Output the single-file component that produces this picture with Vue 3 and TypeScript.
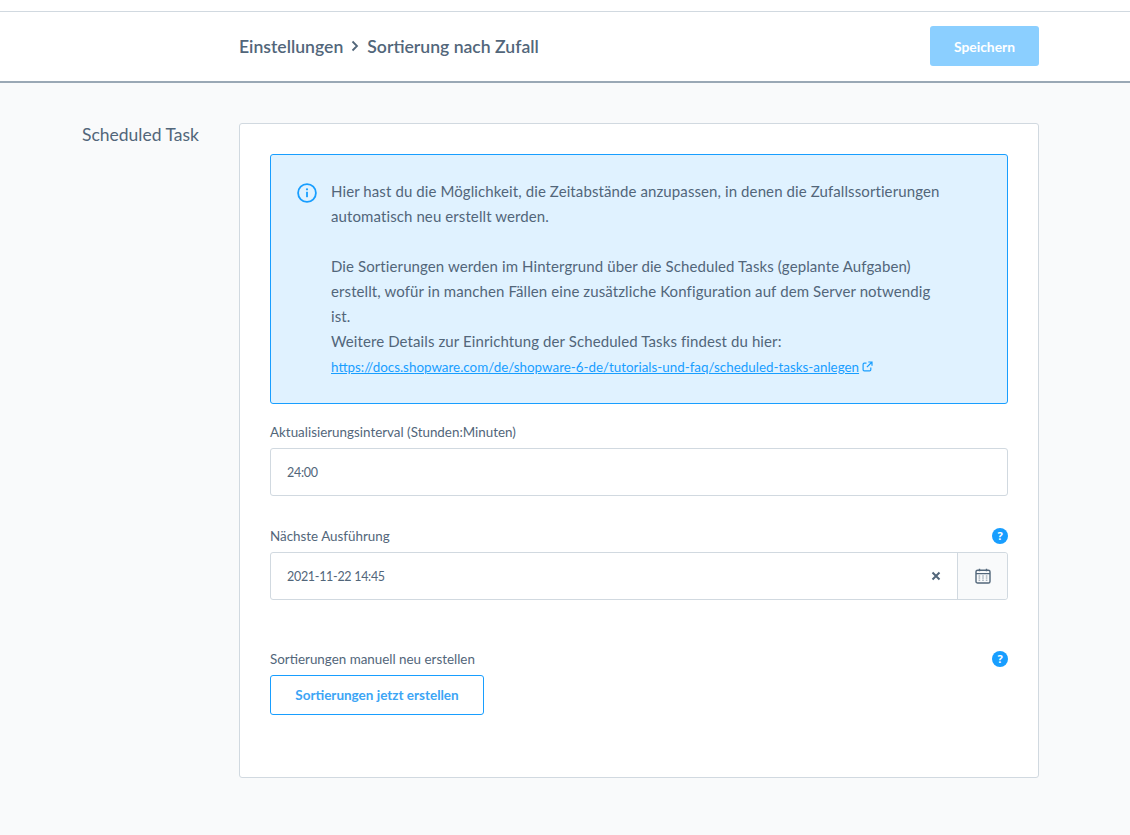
<script setup lang="ts">
const nextRun = "2021-11-22 14:45";
</script>

<template>
  <div class="page">
    <div class="topline"></div>
    <header class="bar">
      <div class="crumbs">
        <span>Einstellungen</span>
        <svg class="chev" width="10" height="12" viewBox="0 0 10 12"><path d="M2.5 1.5 7 6l-4.5 4.5" fill="none" stroke="#52667a" stroke-width="1.8" /></svg>
        <span>Sortierung nach Zufall</span>
      </div>
      <button class="save">Speichern</button>
    </header>
    <main class="content">
      <div class="side">Scheduled Task</div>
      <section class="card">
        <div class="alert">
          <svg class="info" width="20" height="20" viewBox="0 0 20 20">
            <circle cx="10" cy="10" r="8.9" fill="none" stroke="#189eff" stroke-width="1.8" />
            <rect x="9.1" y="8.8" width="1.8" height="5.4" fill="#189eff" />
            <circle cx="10" cy="6.3" r="1.1" fill="#189eff" />
          </svg>
          <div class="alert-text">
            Hier hast du die Möglichkeit, die Zeitabstände anzupassen, in denen die Zufallssortierungen<br />
            automatisch neu erstellt werden.<br /><br />
            Die Sortierungen werden im Hintergrund über die Scheduled Tasks (geplante Aufgaben)<br />
            erstellt, wofür in manchen Fällen eine zusätzliche Konfiguration auf dem Server notwendig<br />
            ist.<br />
            Weitere Details zur Einrichtung der Scheduled Tasks findest du hier:<br />
            <a class="link">https://docs.shopware.com/de/shopware-6-de/tutorials-und-faq/scheduled-tasks-anlegen</a>
            <svg class="ext" width="11" height="11" viewBox="0 0 11 11" fill="none" stroke="#189eff" stroke-width="1.2">
              <path d="M8.8 6.5v2.2a1.2 1.2 0 0 1-1.2 1.2H2.3a1.2 1.2 0 0 1-1.2-1.2V3.4a1.2 1.2 0 0 1 1.2-1.2h2.2" />
              <path d="M6.3 1h3.7v3.7M10 1 4.9 6.1" />
            </svg>
          </div>
        </div>

        <label class="lbl first">Aktualisierungsinterval (Stunden:Minuten)</label>
        <div class="field">24:00</div>

        <div class="lbl-row second">
          <label class="lbl">Nächste Ausführung</label>
          <span class="help">?</span>
        </div>
        <div class="field date">
          <span class="date-val">{{ nextRun }}</span>
          <svg class="clear" width="10" height="10" viewBox="0 0 10 10"><path d="M1.5 1.5l7 7M8.5 1.5l-7 7" stroke="#52667a" stroke-width="2" /></svg>
          <span class="cal">
            <svg width="16" height="16" viewBox="0 0 16 16" fill="none" stroke="#52667a" stroke-width="1.4">
              <rect x="1" y="2.2" width="14" height="12.8" rx="1.6" />
              <path d="M1 5.6h14M4.5 .8v2.4M11.5 .8v2.4" />
              <path d="M3.6 8h1.6M7.2 8h1.6M10.8 8h1.6M3.6 10h1.6M7.2 10h1.6M10.8 10h1.6M3.6 12.2h1.6M7.2 12.2h1.6M10.8 12.2h1.6" stroke-width="1" opacity=".7" />
            </svg>
          </span>
        </div>

        <div class="lbl-row third">
          <label class="lbl">Sortierungen manuell neu erstellen</label>
          <span class="help">?</span>
        </div>
        <button class="generate">Sortierungen jetzt erstellen</button>
      </section>
    </main>
  </div>
</template>

<style>
html,
body {
  margin: 0;
  background: #f9fafb;
}
</style>

<style scoped>
.page {
  width: 1130px;
  height: 835px;
  overflow: hidden;
  font-family: Lato, "Noto Sans", sans-serif;
  color: #52667a;
  background: #f9fafb;
}
.topline {
  height: 11px;
  background: #fff;
  border-bottom: 1px solid #d1d9e0;
}
.bar {
  height: 69px;
  box-sizing: content-box;
  background: #fff;
  border-bottom: 2px solid #9aa8b5;
  display: flex;
  align-items: center;
  justify-content: space-between;
  padding: 0 91px 0 239px;
}
.crumbs {
  display: flex;
  align-items: center;
  gap: 7px;
  font-size: 17.6px;
  font-weight: 600;
  margin-top: -1px;
}
.save {
  width: 109px;
  height: 40px;
  margin-top: -1px;
  border: 0;
  border-radius: 3px;
  background: #8bcfff;
  color: #fff;
  font: 700 13.8px Lato, sans-serif;
}
.content {
  display: flex;
  padding-top: 40px;
}
.side {
  width: 157px;
  padding: 1px 0 0 82px;
  font-size: 17.5px;
  line-height: 22px;
  box-sizing: content-box;
}
.card {
  width: 800px;
  height: 655px;
  box-sizing: border-box;
  margin-left: 0;
  background: #fff;
  border: 1px solid #d1d9e0;
  border-radius: 3px;
  padding: 30px 30px 0;
}
.alert {
  height: 250px;
  box-sizing: border-box;
  display: flex;
  background: #e0f2ff;
  border: 1px solid #189eff;
  border-radius: 3px;
  padding: 24px 0 0 26px;
}
.info {
  flex: none;
  margin-top: 4px;
}
.alert-text {
  margin-left: 14px;
  font-size: 15px;
  letter-spacing: 0.1px;
  line-height: 25px;
  white-space: nowrap;
}
.link {
  color: #189eff;
  font-size: 13.4px;
  letter-spacing: 0;
  text-decoration: underline;
}
.ext {
  margin-left: 3px;
}
.lbl {
  display: block;
  font-size: 13.4px;
  line-height: 18px;
}
.first {
  margin: 19px 0 7px;
}
.field {
  height: 48px;
  box-sizing: border-box;
  border: 1px solid #d1d9e0;
  border-radius: 3px;
  background: #fff;
  padding-left: 16px;
  font-size: 12.5px;
  letter-spacing: -0.3px;
  line-height: 48px;
}
.lbl-row {
  display: flex;
  justify-content: space-between;
  align-items: center;
  height: 16px;
}
.second {
  margin: 32px 0 8px;
}
.third {
  margin: 51px 0 8px;
}
.help {
  width: 16px;
  height: 16px;
  border-radius: 50%;
  background: #189eff;
  color: #fff;
  font: 700 11px/16px "Noto Sans", sans-serif;
  text-align: center;
}
.date {
  display: flex;
  align-items: center;
  padding-right: 0;
}
.date-val {
  flex: 1;
  padding-top: 2px;
}
.clear {
  margin-right: 16px;
}
.cal {
  width: 49px;
  height: 46px;
  display: flex;
  align-items: center;
  justify-content: center;
  background: #f9fafb;
  border-left: 1px solid #d1d9e0;
  border-radius: 0 3px 3px 0;
}
.generate {
  display: block;
  width: 214px;
  height: 40px;
  background: #fff;
  border: 1px solid #189eff;
  border-radius: 3px;
  color: #3ca5f5;
  font: 700 13.5px Lato, sans-serif;
}
</style>
